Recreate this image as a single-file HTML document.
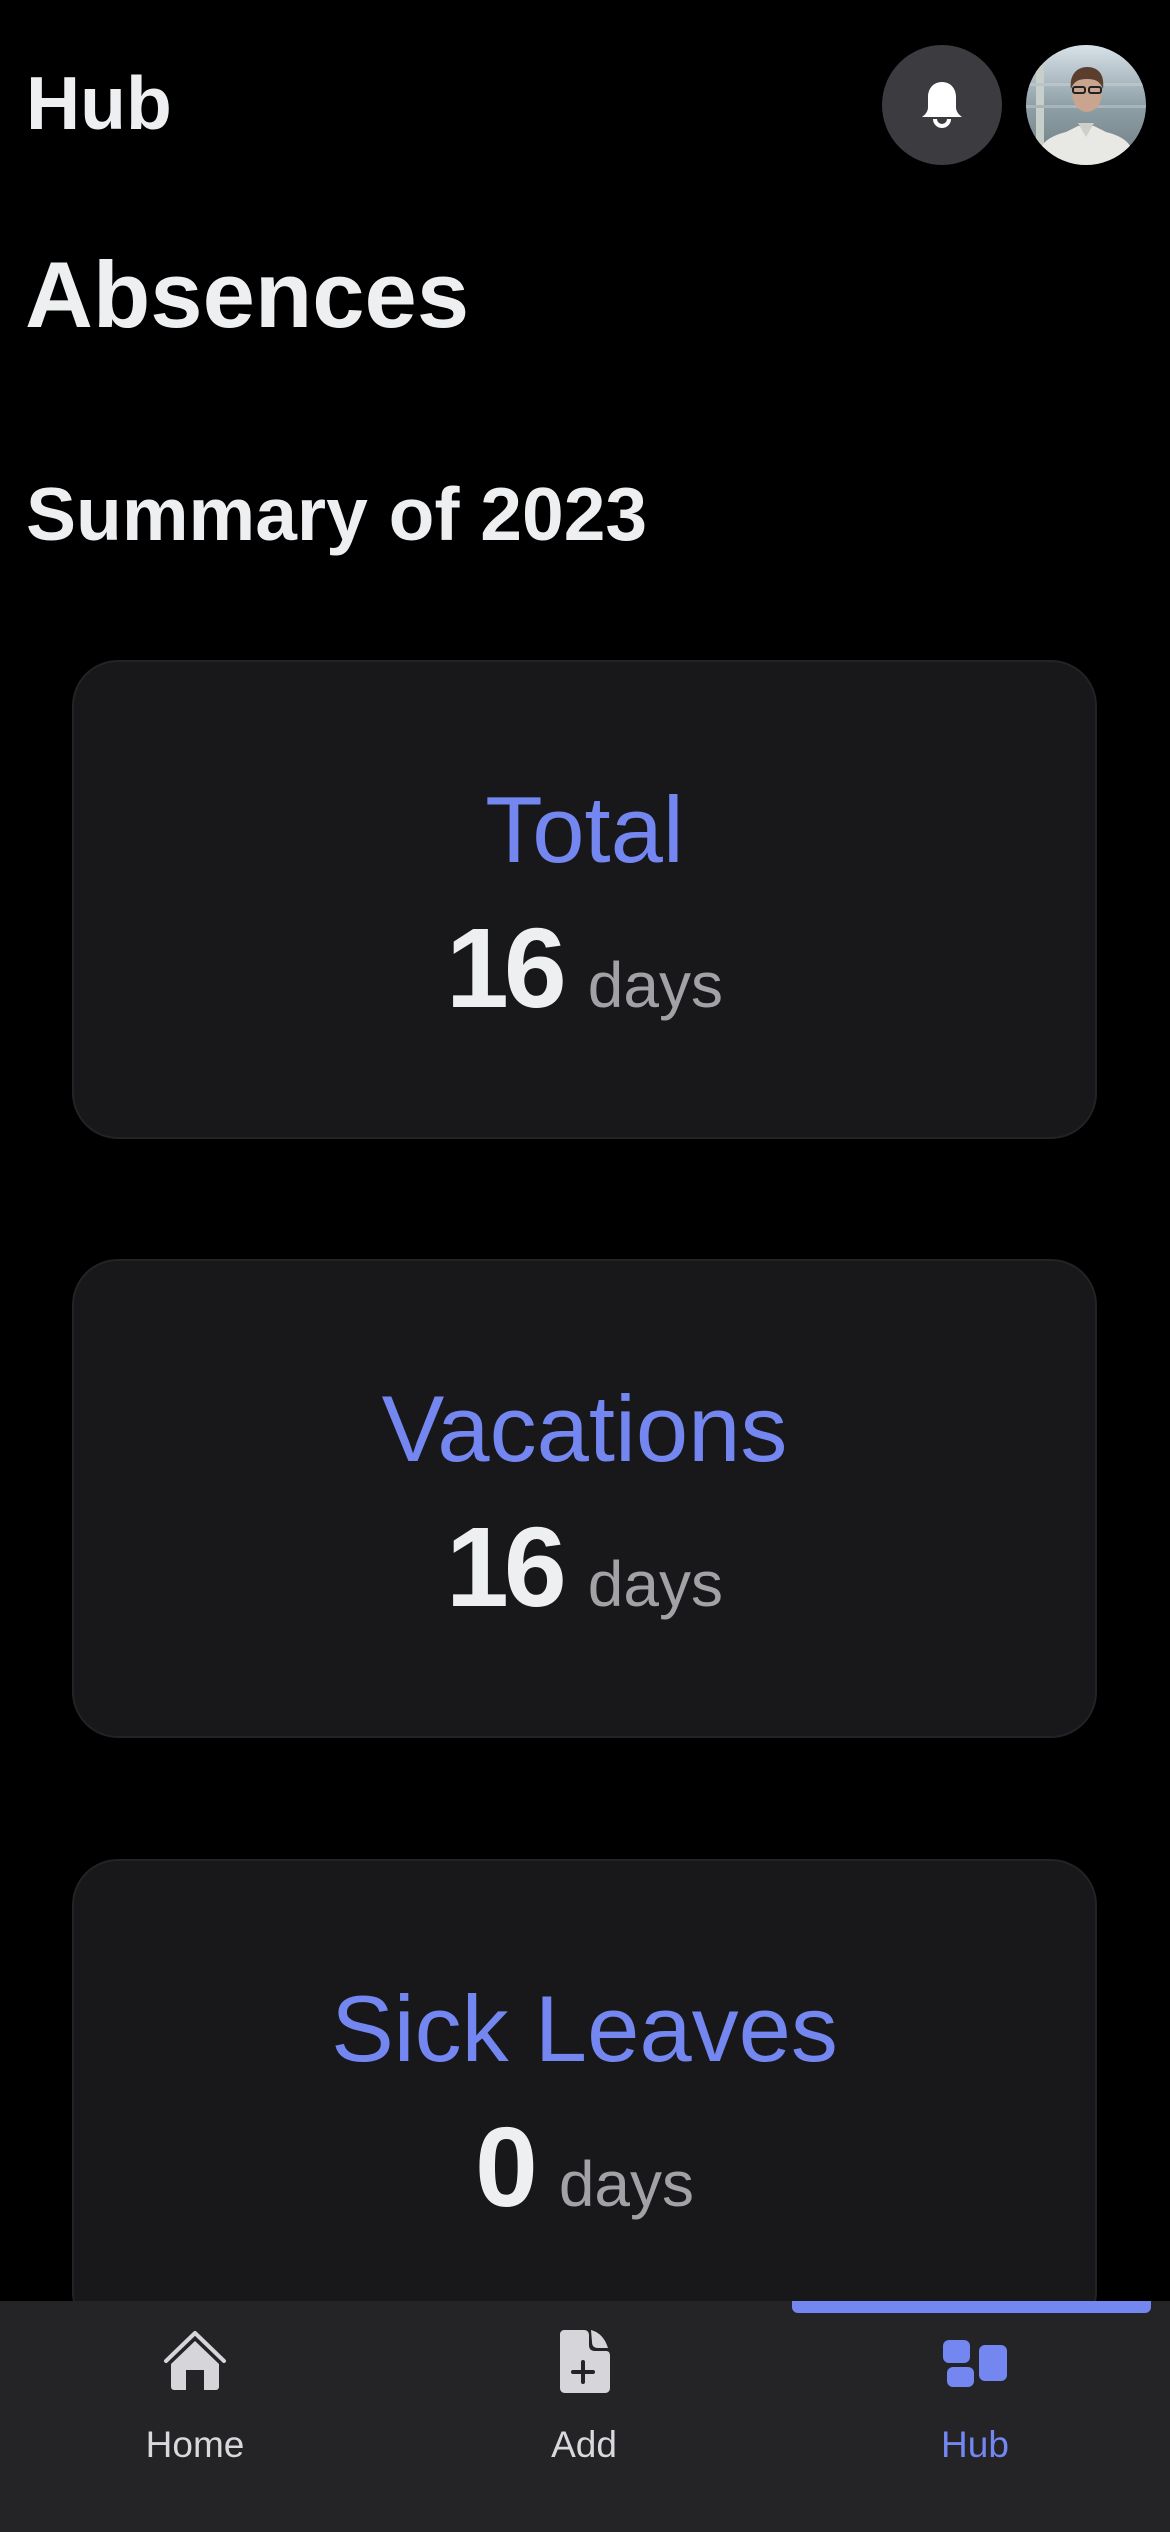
<!DOCTYPE html>
<html><head><meta charset="utf-8"><style>
*{margin:0;padding:0;box-sizing:border-box}
body{width:1170px;height:2532px;background:#000;overflow:hidden;position:relative;font-family:"Liberation Sans",sans-serif;color:#eeeff1}
.a{position:absolute;line-height:1;white-space:nowrap}
.card{position:absolute;left:72px;width:1025px;height:479px;background:#18181b;border:2px solid #232326;border-radius:46px}
.t{position:absolute;left:0;right:0;text-align:center;top:121px;font-size:94px;color:#7486f0;line-height:1}
.n{position:absolute;left:0;right:0;text-align:center;top:250px;line-height:1}
.n b{font-size:113px;letter-spacing:-5px;color:#eeeff1}
.n span{font-size:64px;color:#a1a1a6;margin-left:26px}
.nav{position:absolute;left:0;top:2301px;width:1170px;height:231px;background:#242427}
.lbl{position:absolute;top:2426px;font-size:37px;line-height:1;width:300px;text-align:center;color:#d9d9dd}
</style></head><body>
<div class="a" style="left:26px;top:66px;font-size:75px;font-weight:bold">Hub</div>
<div class="a" style="left:25px;top:248px;font-size:94px;font-weight:bold">Absences</div>
<div class="a" style="left:26px;top:477px;font-size:75px;font-weight:bold">Summary of 2023</div>

<div style="position:absolute;left:882px;top:45px;width:120px;height:120px;border-radius:50%;background:#3b3b40"></div>
<svg style="position:absolute;left:912px;top:75px" width="60" height="60" viewBox="0 0 60 60">
<path d="M30 7c-9 0-14 7-14 15v10c0 4-2 7-6 10h40c-4-3-6-6-6-10V22c0-8-5-15-14-15z" fill="#fff"/>
<path d="M23 44a7 7 0 0 0 14 0" fill="none" stroke="#fff" stroke-width="4"/>
</svg>
<svg style="position:absolute;left:1026px;top:45px" width="120" height="120" viewBox="0 0 120 120">
<defs><clipPath id="c"><circle cx="60" cy="60" r="60"/></clipPath><linearGradient id="g" x1="0" y1="0" x2="0" y2="1"><stop offset="0" stop-color="#d8e2e8"/><stop offset=".5" stop-color="#8fa0a8"/><stop offset="1" stop-color="#6f7c80"/></linearGradient></defs>
<g clip-path="url(#c)">
<rect width="120" height="120" fill="url(#g)"/>
<rect x="10" y="20" width="8" height="100" fill="#c7cfc9"/>
<rect x="0" y="38" width="120" height="3" fill="#b8c4c8"/>
<rect x="0" y="60" width="120" height="3" fill="#a9b5b8"/>
<path d="M10 120c2-20 10-28 30-33l12-6h16l12 6c20 5 28 13 30 33z" fill="#e8e8e4"/>
<path d="M52 78h16l-8 14z" fill="#cfcfc9"/>
<ellipse cx="61" cy="48" rx="15" ry="19" fill="#c9a48e"/>
<path d="M45 44c-2-14 6-22 16-22s18 6 16 22c-3-8-8-10-16-10s-13 2-16 10z" fill="#5a3e2e"/>
<rect x="47" y="42" width="12" height="6" rx="2" fill="none" stroke="#222" stroke-width="2"/>
<rect x="63" y="42" width="12" height="6" rx="2" fill="none" stroke="#222" stroke-width="2"/>
</g></svg>

<div class="card" style="top:660px"><div class="t">Total</div><div class="n"><b>16</b><span>days</span></div></div>
<div class="card" style="top:1259px"><div class="t">Vacations</div><div class="n"><b>16</b><span>days</span></div></div>
<div class="card" style="top:1859px"><div class="t">Sick Leaves</div><div class="n"><b>0</b><span>days</span></div></div>

<div class="nav"></div>
<div style="position:absolute;left:792px;top:2301px;width:359px;height:12px;border-radius:0 0 6px 6px;background:#7486f0"></div>
<svg style="position:absolute;left:163px;top:2330px" width="64" height="62" viewBox="0 0 64 62">
<path d="M3 31L32 3l29 28" fill="none" stroke="#d6d6da" stroke-width="4" stroke-linecap="round" stroke-linejoin="round"/>
<path d="M8 34L32 11l24 23v23a3 3 0 0 1-3 3H41V40H23v20H11a3 3 0 0 1-3-3z" fill="#d6d6da"/>
</svg>
<svg style="position:absolute;left:558px;top:2328px" width="54" height="66" viewBox="0 0 54 66">
<path d="M6 2h20c3 0 5 2 5 5v10c0 4 2 6 6 6h11c3 0 4 2 4 5v32c0 3-2 5-5 5H7c-3 0-5-2-5-5V6c0-2 2-4 4-4z" fill="#d6d6da"/>
<path d="M33 2c8 2 14 8 17 18H40c-4 0-6-2-6-6z" fill="#d6d6da"/>
<path d="M25 34v20M15 44h20" stroke="#242427" stroke-width="4" stroke-linecap="round"/>
</svg>
<svg style="position:absolute;left:942px;top:2339px" width="66" height="50" viewBox="0 0 66 50">
<rect x="1" y="1" width="27" height="23" rx="6" fill="#7486f0"/>
<rect x="5" y="28" width="27" height="20" rx="6" fill="#7486f0"/>
<rect x="37" y="6" width="28" height="36" rx="6" fill="#7486f0"/>
</svg>
<div class="lbl" style="left:45px">Home</div>
<div class="lbl" style="left:434px">Add</div>
<div class="lbl" style="left:825px;color:#7486f0">Hub</div>
</body></html>
